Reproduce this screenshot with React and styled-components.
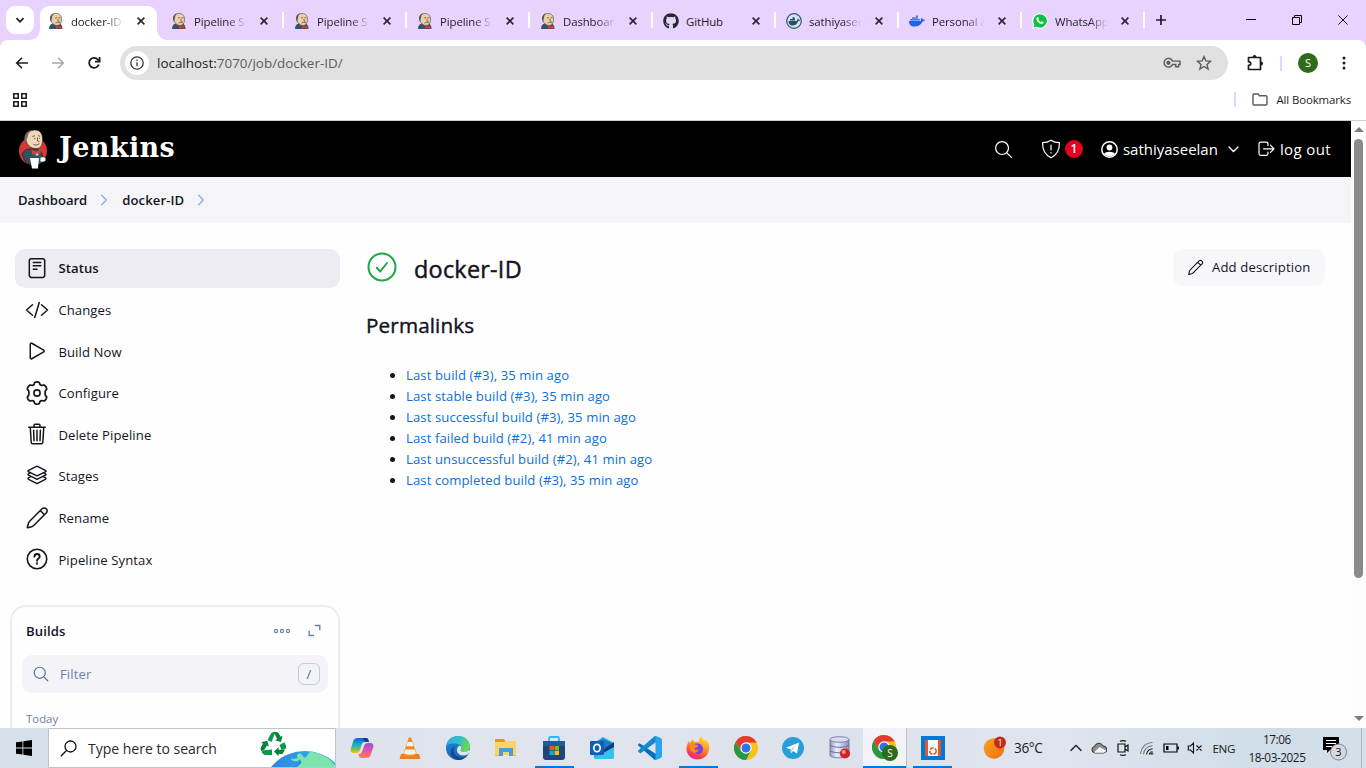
import React from "react";
import styled, { createGlobalStyle, css } from "styled-components";
import { FaGithub, FaDocker } from "react-icons/fa";

const Global = createGlobalStyle`
  *, *::before, *::after { box-sizing: border-box; }
  html, body { margin: 0; padding: 0; overflow: hidden; }
  body { font-family: "Open Sans", "Noto Sans", sans-serif; font-size: 13.1px; color: #14141f; background: #fefefe; }
  svg { display: block; flex: none; }
`;

const Screen = styled.div`
  width: 1366px;
  height: 768px;
  display: flex;
  flex-direction: column;
  overflow: hidden;
`;

const Label = styled.span`
  white-space: nowrap;
  line-height: 1;
  font-size: ${(p) => p.$size || 13.1}px;
  font-weight: ${(p) => p.$weight || 400};
  letter-spacing: ${(p) => (p.$track === undefined ? 0.1 : p.$track)}px;
  color: ${(p) => p.$color || "inherit"};
  padding-top: ${(p) => p.$drop || 0}px;
`;

/* ---------- Browser chrome ---------- */

const TabStrip = styled.div`
  height: 40px;
  flex: none;
  display: flex;
  align-items: flex-end;
  background: #e8d3ff;
  padding-left: 6px;
`;

const TabSearch = styled.div`
  width: 28px;
  height: 28px;
  margin: 0 6px 6px 0;
  border-radius: 9px;
  background: #fff;
  display: grid;
  place-items: center;
`;

const Tab = styled.div`
  position: relative;
  width: 117px;
  height: 34px;
  margin-right: 6px;
  padding: 0 12px 5px 8px;
  display: flex;
  align-items: center;
  border-radius: 9px 9px 0 0;
  background: ${(p) => (p.$active ? "#fff" : "transparent")};
  ${(p) =>
    p.$active &&
    css`
      &::before,
      &::after {
        content: "";
        position: absolute;
        bottom: 0;
        width: 10px;
        height: 10px;
      }
      &::before {
        left: -10px;
        background: radial-gradient(circle at 0 0, transparent 9.5px, #fff 10px);
      }
      &::after {
        right: -10px;
        background: radial-gradient(circle at 100% 0, transparent 9.5px, #fff 10px);
      }
    `}
  ${(p) =>
    p.$divider &&
    css`
      &::after {
        content: "";
        position: absolute;
        right: -4px;
        top: 6px;
        width: 2px;
        height: 16px;
        background: #fff;
      }
    `}
`;

const TabTitle = styled.span`
  width: 54px;
  margin: 2px 0 0 7px;
  white-space: nowrap;
  font-size: 11.4px;
  line-height: 20px;
  letter-spacing: -0.1px;
  color: #1f1b24;
  mask-image: ${(p) => (p.$fade ? "linear-gradient(to right, #000 62%, transparent 98%)" : "none")};
`;

const TabClose = styled.span`
  margin-left: auto;
`;

const NewTab = styled.div`
  height: 34px;
  margin-left: 8px;
  padding-bottom: 6px;
  display: grid;
  place-items: center;
`;

const WindowButtons = styled.div`
  margin-left: auto;
  height: 40px;
  display: flex;
  & > span {
    width: 46px;
    display: grid;
    place-items: center;
  }
`;

const ToolbarBack = styled.div`
  flex: none;
  background: #e8d3ff;
`;

const Toolbar = styled.div`
  height: 46px;
  display: flex;
  align-items: center;
  background: #fff;
  border-radius: 8px 8px 0 0;
  padding-left: 14px;
`;

const NavButton = styled.span`
  width: 16px;
  margin-right: 20px;
`;

const Omnibox = styled.div`
  width: 1108px;
  height: 34px;
  margin-left: -2px;
  border-radius: 17px;
  background: #e1e1e1;
  display: flex;
  align-items: center;
  padding: 0 16px 0 5px;
`;

const OmniActions = styled.div`
  display: flex;
  align-items: center;
  gap: 15px;
`;

const SiteInfo = styled.span`
  width: 24px;
  height: 24px;
  border-radius: 50%;
  background: #fff;
  display: grid;
  place-items: center;
  margin-right: 8px;
`;

const Url = styled.span`
  flex: 1;
  font-size: 13.4px;
  letter-spacing: 0.02px;
  color: #5b5b5f;
  b { font-weight: 400; color: #1c1b1f; }
`;

const ToolbarRight = styled.div`
  display: flex;
  align-items: center;
  margin-left: 18px;
`;

const Bar = styled.span`
  width: 2px;
  height: 15px;
  margin-left: ${(p) => p.$gap || 0}px;
  background: #e8d3ff;
`;

const Avatar = styled.span`
  width: 20px;
  height: 20px;
  border-radius: 50%;
  background: #2f6b1c;
  color: #fff;
  font: 11px/20px "Open Sans", sans-serif;
  text-align: center;
  margin: 0 24px 0 16px;
`;

const BookmarkBar = styled.div`
  height: 35px;
  flex: none;
  display: flex;
  align-items: center;
  padding: 0 15px 7px 13px;
  background: #fff;
  border-bottom: 1px solid #cfd1d0;
`;

const AllBookmarks = styled.div`
  margin-left: auto;
  display: flex;
  align-items: center;
`;

const FolderIcon = styled.svg`
  margin: 0 8px 0 16px;
`;

/* ---------- Page ---------- */

const Viewport = styled.div`
  height: 607px;
  flex: none;
  display: flex;
  overflow: hidden;
`;

const Page = styled.div`
  width: 1351px;
  height: 607px;
  overflow: hidden;
`;

const Scrollbar = styled.div`
  width: 15px;
  background: #fcfcfc;
  display: flex;
  flex-direction: column;
  align-items: center;
  padding: 6px 0 7px;
`;

const Thumb = styled.div`
  width: 9px;
  height: 439px;
  margin-top: 7px;
  border-radius: 5px;
  background: #8b8b8b;
`;

const Arrow = styled.div`
  border-left: 5px solid transparent;
  border-right: 5px solid transparent;
  ${(p) =>
    p.$down
      ? css`
          border-top: 5px solid #7d7d7d;
          margin-top: auto;
        `
      : css`
          border-bottom: 5px solid #7d7d7d;
        `}
`;

const Header = styled.header`
  height: 56px;
  background: #000;
  color: #fff;
  display: flex;
  align-items: center;
  padding: 0 20px 0 18px;
`;

const Wordmark = styled.span`
  margin-left: 11px;
  margin-top: -4px;
  font: bold 27px/1 "DejaVu Serif", serif;
  letter-spacing: 0.4px;
`;

const HeaderTools = styled.div`
  margin-left: auto;
  display: flex;
  align-items: center;
`;

const ShieldIcon = styled.svg`
  margin-left: 27px;
`;

const UserName = styled.span`
  display: flex;
  margin: 0 10px 0 5px;
`;

const LogoutIcon = styled.svg`
  margin: 0 5px 0 19px;
`;

const Badge = styled.span`
  width: 18px;
  height: 18px;
  border-radius: 50%;
  background: #e6001f;
  font-size: 12px;
  font-weight: 600;
  line-height: 18px;
  text-align: center;
  margin: 0 18px 0 4px;
`;

const Breadcrumbs = styled.nav`
  height: 46px;
  background: #f5f5f8;
  display: flex;
  align-items: center;
  padding-left: 18px;
  & > svg { margin: 0 11px 0 10px; }
`;

const Body = styled.div`
  display: flex;
`;

const Side = styled.aside`
  width: 340px;
  padding: 26px 0 0 15px;
`;

const Task = styled.div`
  height: 39px;
  margin-bottom: 2.6px;
  padding-left: 10px;
  border-radius: 10px;
  display: flex;
  align-items: center;
  background: ${(p) => (p.$active ? "#ececf2" : "transparent")};
  & > svg { margin: -1px 9.400px 0 0; }
`;

const BuildsCard = styled.section`
  width: 330px;
  height: 160px;
  margin: 26px 0 0 -5px;
  border: 2px solid #ebebf3;
  border-radius: 16px;
  padding: 11px 10px 0;
`;

const BuildsHead = styled.div`
  height: 27px;
  padding: 0 7px 0 4px;
  display: flex;
  align-items: center;
  color: #14141f;
  & > svg { margin-bottom: 2px; }
  & > svg:first-of-type { margin-left: auto; margin-right: 17px; }
`;

const FilterBox = styled.div`
  height: 38px;
  margin-top: 10px;
  padding: 0 8px 0 10px;
  border-radius: 10px;
  background: #f3f3f8;
  display: flex;
  align-items: center;
  color: #6a83a8;
  & > svg { margin-right: 10px; }
`;

const KeyHint = styled.span`
  width: 22px;
  height: 22px;
  margin-left: auto;
  border: 1px solid #c3ccdb;
  border-radius: 6px;
  display: grid;
  place-items: center;
  font-size: 13px;
  line-height: 1;
  color: #4d6a94;
`;

const Day = styled.div`
  margin: 19px 0 0 4px;
  font-size: 11.4px;
  line-height: 13px;
  color: #6a83a8;
`;

const Main = styled.main`
  flex: 1;
  padding: 26px 26px 0 26px;
`;

const TitleRow = styled.div`
  height: 38px;
  display: flex;
  align-items: center;
  & > svg { margin: -2px 16px 0 0; }
`;

const Title = styled.h1`
  margin: 1px 0 0;
  font-size: 23.400px;
  font-weight: 500;
  line-height: 38px;
  letter-spacing: 0.25px;
  -webkit-text-stroke: 0.45px currentColor;
`;

const EditButton = styled.div`
  width: 152px;
  height: 37px;
  margin: -1px 0 0 auto;
  border-radius: 10px;
  background: #f7f7fa;
  display: flex;
  align-items: center;
  padding-left: 14px;
  gap: 8px;
`;

const Subtitle = styled.h2`
  margin: 23px 0 0;
  font-size: 20.7px;
  font-weight: 500;
  line-height: 30px;
  letter-spacing: 0.12px;
  -webkit-text-stroke: 0.4px currentColor;
`;

const Links = styled.ul`
  margin: 25px 0 0;
  padding: 0 0 0 40px;
  line-height: 21px;
`;

const LinkItem = styled.li`
  & > span { line-height: 21px; color: #0a70dc; }
`;

/* ---------- Taskbar ---------- */

const Taskbar = styled.div`
  height: 40px;
  flex: none;
  display: flex;
  background: linear-gradient(to right, #d5e0ea 0, #dfe3ec 350px, #e1e4ed 600px, #dce2eb 850px, #e0e4ee 1050px, #d0dee9 1250px, #d3dfe9 100%);
`;

const Start = styled.div`
  width: 48px;
  display: grid;
  place-items: center;
`;

const SearchBox = styled.div`
  width: 288px;
  height: 40px;
  background: #fff;
  border: 1px solid #bfc4c9;
  display: flex;
  align-items: center;
  padding-left: 11px;
  & > span { margin-left: 11px; color: #2b2b2b; }
`;

const Doodle = styled.svg`
  margin-left: auto;
`;

const Apps = styled.div`
  display: flex;
  margin-left: 2px;
`;

const AppSlot = styled.div`
  width: ${(p) => p.$w || 48}px;
  height: 40px;
  display: flex;
  align-items: center;
  justify-content: center;
  background-color: ${(p) => (p.$focus ? "#f1f3f8" : "transparent")};
  box-shadow: ${(p) => (p.$focus ? "1px 0 0 #b9c1ca" : "none")};
  background-image: ${(p) => (p.$open ? "linear-gradient(#0078d7, #0078d7)" : "none")};
  background-size: ${(p) => p.$line || 39}px 2px;
  background-repeat: no-repeat;
  background-position: 50% 100%;
`;

const Tray = styled.div`
  flex: 1;
  display: flex;
  align-items: center;
  padding-left: 24px;
  color: #1a1a1a;
`;

const TrayIcons = styled.div`
  display: flex;
  align-items: center;
  margin-left: 26px;
  gap: 8px;
`;

const WeatherText = styled.span`
  margin-left: 7px;
`;

const LangText = styled.span`
  margin-left: 10px;
`;

const Clock = styled.div`
  width: 62px;
  margin-left: 11px;
  text-align: center;
  font-size: 11.8px;
  line-height: 18px;
  letter-spacing: -0.45px;
  white-space: nowrap;
`;

const Notice = styled.svg`
  margin-left: 14px;
`;

const ShowDesktop = styled.span`
  width: 1px;
  height: 40px;
  background: #a9b3bc;
  margin: 0 4px 0 auto;
`;

/* ---------- Icons ---------- */

const Stroke = ({ size = 24, w = 32, children, color = "currentColor" }) => (
  <svg width={size} height={size} viewBox="0 0 512 512" fill="none" stroke={color} strokeWidth={w} strokeLinecap="round" strokeLinejoin="round">
    {children}
  </svg>
);

const SearchIcon = (p) => (
  <Stroke {...p}>
    <path d="M221 64a157 157 0 1 0 157 157A157 157 0 0 0 221 64zM338 338l110 110" />
  </Stroke>
);
const StatusIcon = () => (
  <Stroke>
    <rect x="92" y="56" width="328" height="400" rx="44" />
    <path d="M176 136h160M176 208h160M176 280h80" />
  </Stroke>
);
const CodeIcon = () => (
  <Stroke>
    <path d="M160 368 32 256l128-112M352 368l128-112-128-112M304 96l-96 320" />
  </Stroke>
);
const PlayIcon = () => (
  <Stroke>
    <path d="M112 111v290c0 17 18 28 33 20l254-145c15-9 15-31 0-40L145 91c-15-8-33 3-33 20z" />
  </Stroke>
);
const GearIcon = () => (
  <Stroke w={34}>
    <circle cx="256" cy="256" r="66" />
    <path d="M210 48 Q256 24 302 48 L316 92 Q332 108 354 106 L398 98 Q442 126 448 176 L420 214 Q412 256 420 298 L448 336 Q442 386 398 414 L354 406 Q332 404 316 420 L302 464 Q256 488 210 464 L196 420 Q180 404 158 406 L114 414 Q70 386 64 336 L92 298 Q100 256 92 214 L64 176 Q70 126 114 98 L158 106 Q180 108 196 92 Z" transform="translate(-20 -20) scale(1.08)" />
  </Stroke>
);
const TrashIcon = () => (
  <Stroke>
    <path d="m112 112 20 320c1 18 14 32 32 32h184c18 0 31-14 32-32l20-320M80 112h352M192 112V72a24 24 0 0 1 24-24h80a24 24 0 0 1 24 24v40M256 176v224M184 176l8 224M328 176l-8 224" />
  </Stroke>
);
const LayersIcon = () => (
  <Stroke>
    <path d="M434 137 266 52q-10-5-20 0L78 137c-18 9-18 21 0 30l168 82q10 5 20 0l168-82c18-9 18-21 0-30z" />
    <path d="m112 184-34 20c-18 9-18 26 0 35l168 85q10 5 20 0l168-85c18-9 18-26 0-35l-34-20M112 272l-34 20c-18 9-18 26 0 35l168 85q10 5 20 0l168-85c18-9 18-26 0-35l-34-20" />
  </Stroke>
);
const PencilIcon = ({ size = 24, w = 32 }) => (
  <Stroke size={size} w={w}>
    <path d="M364 60 104 320c-16 16-26 32-32 52l-22 82c-2 8 2 11 10 9l80-22c20-6 36-16 52-32l260-260c24-24 24-62 0-88s-64-25-88-1zM326 98l88 88" />
  </Stroke>
);
const HelpIcon = () => (
  <Stroke w={34}>
    <circle cx="256" cy="256" r="208" />
    <path d="M202 202c2-72 110-70 112 0 0 46-58 44-58 92" strokeWidth="40" />
    <circle cx="256" cy="352" r="8" fill="currentColor" />
  </Stroke>
);
const Chevron = ({ size = 14, color = "#9aaccb" }) => (
  <Stroke size={size} w={50} color={color}>
    <path d="m170 80 172 176-172 176" />
  </Stroke>
);

const Butler = () => (
  <svg width="16" height="16" viewBox="0 0 32 32">
    <path d="M2 32c0-7 3-10 8-11h12c5 1 7 4 7 11z" fill="#2f5468" />
    <path d="M6 14C4 6 8 1 16 1s11 5 11 12c0 8-4 12-9 12S7 21 6 14z" fill="#edcfa8" stroke="#5c4a40" strokeWidth="1.300" />
    <path d="M6 18C2 11 4 2 12 1c-3 3-4 6-4 10-1 1-2 3-2 7z" fill="#5e5653" />
    <path d="M14 10l4-1M21 9l4 1M20 11v5l3 1M15 20q4-3 9 0" stroke="#4a3a33" strokeWidth="1.300" fill="none" />
    <path d="M16 25l5 2 6-2v7l-6-2-5 2z" fill="#d33833" />
  </svg>
);

const JenkinsMark = () => (
  <svg width="30" height="40" viewBox="0 0 30 40">
    <ellipse cx="15" cy="22" rx="14" ry="14" fill="#d33833" />
    <path d="M4 25c3-5 6-5 10-5s8 0 10 5l2 7-4 3H9l-3-5z" fill="#335061" stroke="#111" strokeWidth=".6" />
    <path d="M8 11C8 4 12 1 17 1c5 0 8 4 7.500 10.500 0 5.500-2.500 8-6.500 8-5 0-9-3-10-8.500z" fill="#f0d6b7" stroke="#222" strokeWidth=".6" />
    <path d="M7 14C5 7 8 1.500 14 1.200 10.500 3 10 5 9.700 8.500 8.500 9.500 7.500 11 7 14z" fill="#6d6b6d" />
    <path d="M14.500 7.500l2.500-.8M20 6.500l2 .8M19.500 8.500v3.500l2 .8M15.500 15.500q3 1.500 6-.8M16 9.500h1.300M21 9.300h1" stroke="#332b28" strokeWidth=".7" fill="none" />
    <path d="M13.500 20.500l5 2.300 4-3v5.500l-4-1.500-4 2.500z" fill="#e23b36" />
    <circle cx="19" cy="25.500" r="1.600" fill="#9fb9c8" />
    <path d="M12 29h9l-1 10.500h-6z" fill="#fff" />
    <path d="M22.500 28.500c3-1.500 6 0 5 3-1 1.500-4 2-5.500.5z" fill="#fff" stroke="#555" strokeWidth=".4" />
  </svg>
);

const CloseIcon = () => (
  <svg width="8" height="8" viewBox="0 0 8 8" stroke="#2a2630" strokeWidth="1.600">
    <path d="M.6.6l6.800 6.800M7.400.6.6 7.400" />
  </svg>
);

const DockerBadge = () => (
  <svg width="16" height="16" viewBox="0 0 16 16">
    <circle cx="8" cy="8" r="7.300" fill="#d7e3ef" stroke="#33566f" strokeWidth="1.200" />
    <path d="M2.500 8h8c1 0 .6-2 1.500-2.500.8.5.8 1 .8 1.400.5-.1 1.200 0 1.200.3-.5.9-1.400 1-2 1C11 11.500 9 12.500 6.500 12.500 4 12.500 2.500 11 2.500 8zM4 6h5v1.500H4zM6.500 4.200h2.200V6H6.500z" fill="#27506b" />
  </svg>
);

const WhatsApp = () => (
  <svg width="16" height="16" viewBox="0 0 16 16">
    <path d="M8 .3A7.700 7.700 0 0 0 1.400 12L.3 15.800l3.900-1A7.700 7.700 0 1 0 8 .3z" fill="#fff" />
    <path d="M8 1.300a6.700 6.700 0 0 0-5.700 10.200l-.8 2.900 3-.8A6.700 6.700 0 1 0 8 1.300z" fill="#0bc143" />
    <path d="M5.200 4.200c.5-.4 1-.3 1.200.2l.5 1.200c.1.400-.6.800-.5 1.200.5 1 1.500 1.800 2.500 2.200.4.100.8-.9 1.200-.7l1.400.7c.4.300 0 1.400-.8 1.800-2.800 1-6.800-3-6.300-5.300.1-.5.400-1 .8-1.300z" fill="#fff" />
  </svg>
);

const Chrome = ({ badge }) => (
  <svg width={badge ? 26 : 24} height={badge ? 26 : 24} viewBox={badge ? "0 0 26 26" : "0 0 24 24"}>
    <circle cx="12" cy="12" r="12" fill="#fbc116" />
    <path d="M1.600 6A12 12 0 0 1 22.600 6.500H12L7.200 15z" fill="#e33b2e" />
    <path d="M1.600 6l5.600 9.400 9.500-.4L12 24A12 12 0 0 1 1.600 6z" fill="#279847" />
    <circle cx="12" cy="12" r="5.700" fill="#fff" />
    <circle cx="12" cy="12" r="4.500" fill="#2f73e8" />
    {badge && (
      <>
        <circle cx="18" cy="18" r="8" fill="#2f6b1c" />
        <text x="18" y="21.800" fontSize="10" fill="#fff" textAnchor="middle" fontFamily="Open Sans, sans-serif">S</text>
      </>
    )}
  </svg>
);

const Copilot = () => (
  <svg width="24" height="22" viewBox="0 0 24 22">
    <defs>
      <linearGradient id="cpA" x1="0" y1="0" x2="0" y2="1"><stop offset="0" stopColor="#0f62d9" /><stop offset=".45" stopColor="#19a9d5" /><stop offset=".75" stopColor="#7bc24a" /><stop offset="1" stopColor="#f5c01c" /></linearGradient>
      <linearGradient id="cpB" x1="0" y1="0" x2="0" y2="1"><stop offset="0" stopColor="#9b4fe0" /><stop offset=".5" stopColor="#e354a6" /><stop offset="1" stopColor="#fb8249" /></linearGradient>
    </defs>
    <path d="M8 1h8c2 0 2.500 2 3 4h-4c-2 0-3 1-3.500 3L10 13c-.6 2-1.500 3-4 3H4c-3 0-4-2-3-5l2-6c.8-3 2-4 5-4z" fill="url(#cpA)" />
    <path d="M18 6h2c3 0 4 2 3 5l-2 6c-.8 3-2 4-5 4h-4c-2 0-3-1-3.500-4 2 0 3-.5 3.800-3L14 9c.6-2 1.500-3 4-3z" fill="url(#cpB)" />
    <path d="M8 1h8c2 0 2.500 2 3 4h-3c-2 0-2.500-4-4.500-4z" fill="#173c96" />
  </svg>
);
const Vlc = () => (
  <svg width="22" height="24" viewBox="0 0 22 24">
    <path d="M2 18h18l1.500 5H.5z" fill="#ef7f12" />
    <path d="M9.700 2Q11 .3 12.300 2L18 19q-7 4-14 0z" fill="#f28a1d" />
    <path d="M8.600 6h4.800l1.300 4.200H7.300zM6.200 13.500h9.600l1.200 4q-6 2.400-12 0z" fill="#f2f2f2" />
  </svg>
);
const Edge = () => (
  <svg width="24" height="24" viewBox="0 0 24 24">
    <defs>
      <linearGradient id="edA" x1="0" y1="0" x2="1" y2=".4"><stop offset="0" stopColor="#2aa6dd" /><stop offset=".55" stopColor="#35c1c8" /><stop offset="1" stopColor="#62db4d" /></linearGradient>
      <linearGradient id="edB" x1="0" y1="0" x2="0" y2="1"><stop offset="0" stopColor="#2088d8" /><stop offset="1" stopColor="#1469bd" /></linearGradient>
    </defs>
    <circle cx="12" cy="12" r="12" fill="url(#edB)" />
    <path d="M.2 10C1 4 6 0 12 0c7 0 12 5 12 10.500 0 3.500-2.600 5.500-6 5.500-2.500 0-4-1-3-2.500 1.500-3-1-5.500-5-6C6 7 2 8 .2 10z" fill="url(#edA)" />
    <path d="M9 10c-3 4-1 10 5 11.500 3 .7 6-.5 8-3.500C20 22 16 24 12 24 7 23 4 19 5 15c.5-2.500 2-4.500 4-5z" fill="#114a8b" />
    <path d="M14 9.500c1.500 1.500 1.500 3 .8 4-.8 1.500.7 2.500 3.200 2.500 2 0 4-.7 5-2l1.500.6-2.500 3.600c-5 2.500-10 1-11-3-.4-2 .5-5 3-5.700z" fill="#e0e4ed" />
  </svg>
);
const Explorer = () => (
  <svg width="22" height="20" viewBox="0 0 22 20">
    <path d="M0 1h8l2 2h11v14H0z" fill="#fcd462" />
    <path d="M0 1h8.500l2 1.500L9 4H0z" fill="#d79d14" />
    <path d="M4 18v-8h14v8h-4v-4H8v4z" fill="#4b9bdc" />
    <path d="M0 17h4v1H0zM18 17h3v1h-3z" fill="#f0b93a" />
  </svg>
);
const Store = () => (
  <svg width="24" height="24" viewBox="0 0 24 24">
    <path d="M7 6V2.500C7 1.500 7.500 1 8.500 1h7c1 0 1.500.5 1.500 1.500V6" fill="none" stroke="#2cb8ee" strokeWidth="1.800" />
    <path d="M1 5h22v16c0 2-1 3-3 3H4c-2 0-3-1-3-3z" fill="#1f4478" />
    <path d="M1 5h22v5H1z" fill="#1f5a99" />
    <path d="M7.500 10H12v4.200H7.500z" fill="#f35325" /><path d="M12.600 10H17v4.200h-4.400z" fill="#81bc06" /><path d="M7.500 14.800H12V19H7.500z" fill="#05a6f0" /><path d="M12.600 14.800H17V19h-4.400z" fill="#ffba08" />
  </svg>
);
const Outlook = () => (
  <svg width="24" height="24" viewBox="0 0 24 24">
    <path d="M4 7 13 1l11 6v14c0 1-1 2-2 2H6c-1 0-2-1-2-2z" fill="#28a8ea" />
    <path d="M13 3l9 4-8 7-5-9z" fill="#1a78c8" /><path d="M24 6v6L14 19v-6z" fill="#123b7c" /><path d="M4 22 24 11v10c0 1-1 2-2 2H6z" fill="#35c1f3" />
    <rect y="5" width="14" height="14" rx="1" fill="#0f5db5" />
    <ellipse cx="7" cy="12" rx="3.200" ry="3.700" fill="none" stroke="#fff" strokeWidth="1.700" />
  </svg>
);
const VsCode = () => (
  <svg width="24" height="24" viewBox="0 0 24 24">
    <path d="M1.500 7.200.2 8.500q-.4.500 0 1l16 14q1 .8 1.800.4V18z" fill="#0a6fb8" />
    <path d="M1.500 16.800.2 15.500q-.4-.5 0-1l16-14Q17.200-.3 18 .1V6L3 17q-.8.500-1.500-.2z" fill="#1387cf" />
    <path d="M18 0l5 2.300q1 .5 1 1.500v16.400q0 1-1 1.500L18 24q-.8.300-1.600-.4.600.3 1.100-.6V1q-.5-.9-1.100-.6Q17.200-.3 18 0z" fill="#2ba4ee" />
  </svg>
);
const Firefox = () => (
  <svg width="24" height="24" viewBox="0 0 24 24">
    <defs><linearGradient id="ffA" x1=".8" y1="0" x2=".3" y2="1"><stop offset="0" stopColor="#ffe640" /><stop offset=".45" stopColor="#ff9421" /><stop offset=".8" stopColor="#ff3d4c" /><stop offset="1" stopColor="#e7268f" /></linearGradient></defs>
    <path d="M15 0c2 2 2.500 3.500 3 4.500 1.500.3 1.500-.5 1.500-1C23 6 24 10 23 14c-1 6-6 9.500-11 9.500C5 23.500.5 18.500.5 13c0-3 1-6 2.500-8l.8 2.500C5 5.500 6 4 6.500 3c.5 1.500 1 2.500 2.500 3 1.500-.5 3-.2 4 0C13 4 13.500 1.500 15 0z" fill="url(#ffA)" />
    <path d="M7 9c4-3 10-1 10 4s-6 7-9 3c3 1 4-1 5-2.500H9C7.500 13.500 6.500 11 7 9z" fill="#7542e5" />
    <path d="M4 8c2-1 4-.5 5 .5 2 .5 3 .6 3.500 1-1 2-3.500 2-4 3-.3 2 1.500 3 3.500 2.500-2 3-7 2-8-2-.5-2 0-4 0-5z" fill="#ff8a16" />
  </svg>
);
const Telegram = () => (
  <svg width="22" height="22" viewBox="0 0 22 22">
    <circle cx="11" cy="11" r="11" fill="#289fd9" />
    <path d="M4 10.800 17 5.500 15 16.500 11 14l-2 2.300-.7-4z" fill="#fff" /><path d="m8.500 12.300 6-4.800-4 5.800-1.500 2.500z" fill="#b9d9ec" />
  </svg>
);
const Database = () => (
  <svg width="22" height="24" viewBox="0 0 22 24">
    <defs><linearGradient id="dbA"><stop offset="0" stopColor="#8e96c6" /><stop offset=".35" stopColor="#eef0fd" /><stop offset="1" stopColor="#878fc2" /></linearGradient></defs>
    <path d="M1 3.500v16c0 3 19 3 19 0v-16z" fill="url(#dbA)" stroke="#666c96" strokeWidth=".8" />
    <ellipse cx="10.500" cy="3.500" rx="9.500" ry="2.800" fill="#d7dbf5" stroke="#666c96" strokeWidth=".8" />
    <path d="M1 9c2 3 17 3 19 0M1 14.500c2 3 17 3 19 0" fill="none" stroke="#666c96" />
    <circle cx="16" cy="17.500" r="5" fill="#d3221f" /><circle cx="14.800" cy="16" r="1.900" fill="#f79a92" />
  </svg>
);
const VmIcon = () => (
  <svg width="24" height="24" viewBox="0 0 24 24">
    <path d="M0 0h24v24H0z" fill="#0078d7" /><path d="M4 4h16v16H4z" fill="#fff" /><path d="M4 4h3v16H4zM17 4h3v16h-3z" fill="#e6552b" />
    <circle cx="12" cy="15" r="3.200" fill="none" stroke="#e6552b" strokeWidth="1.500" strokeDasharray="4.500 1" />
  </svg>
);
const Weather = () => (
  <svg width="24" height="24" viewBox="0 0 24 24">
    <defs><linearGradient id="sun" x1="0" y1="0" x2="1" y2="1"><stop offset="0" stopColor="#f8a51b" /><stop offset="1" stopColor="#f06d12" /></linearGradient></defs>
    <circle cx="11" cy="12.500" r="10.300" fill="url(#sun)" />
    <circle cx="17" cy="6.500" r="6" fill="#c42b1c" />
    <text x="17" y="10" fontSize="9" fill="#fff" textAnchor="middle" fontFamily="Open Sans, sans-serif">1</text>
  </svg>
);

const Recycle = () => (
  <Doodle width="76" height="38" viewBox="0 0 76 38">
    <defs><linearGradient id="globe" x1="0" y1="0" x2="1" y2="0"><stop offset=".1" stopColor="#2d83df" /><stop offset=".6" stopColor="#2ea7ee" /></linearGradient></defs>
    <g fill="#0a9a4b">
      <path d="M8.500 11 12 4.500Q12.800 3 14.500 3h2L12.500 13z" />
      <path d="M15 3h2.500Q19 3 20 4.800l1.600 3 1.900-1-1.500 6.200-6-1.700 2-1.200z" fill="#07833d" />
      <path d="m20.500 16 4.800-2.700 1.500 3q1.200 2.700-1.300 4.200l-3 .4z" />
      <path d="M25.700 21 23.500 25h-4v2.300l-4.500-4.700 4.500-4.300v2.400h4z" fill="#07833d" />
      <path d="M13 20.500V26H6Q4 25.500 3 23.500l-.5-2z" />
      <path d="M2.300 22Q1 20 2 18l2-3.600-2-1.200 6.300-1.400 1.600 5.900-2-1.100-2.300 4z" fill="#07833d" />
    </g>
    <circle cx="46" cy="66" r="44" fill="url(#globe)" />
    <path d="M52 22.500C64 25 72 30 77 38H31l4-1.500c3-1 4-2 3-4.500-4 1-6-1-6-3 3 2 4 0 7 0-3-3 1-5.500 3-4 3 2 2 5 5 3 2-2 2-4 5-5.500z" fill="#7fe3b0" />
    <path d="M40 30.500q3 1 2 4l-4 3.500h-7l4-1.500q3-2 5-6z" fill="#2f8de3" />
  </Doodle>
);

/* ---------- Data ---------- */

const tabs = [
  { title: "docker-ID", icon: <Butler />, active: true, fade: true },
  { title: "Pipeline S", icon: <Butler />, divider: true, fade: true },
  { title: "Pipeline S", icon: <Butler />, divider: true, fade: true },
  { title: "Pipeline S", icon: <Butler />, divider: true, fade: true },
  { title: "Dashboar", icon: <Butler />, divider: true, fade: true },
  { title: "GitHub", icon: <FaGithub size={16} color="#24292f" />, divider: true },
  { title: "sathiyasee", icon: <DockerBadge />, divider: true, fade: true },
  { title: "Personal a", icon: <FaDocker size={16} color="#1d63ed" />, divider: true, fade: true },
  { title: "WhatsApp", icon: <WhatsApp />, divider: true, fade: true },
];

const tasks = [
  ["Status", StatusIcon],
  ["Changes", CodeIcon],
  ["Build Now", PlayIcon],
  ["Configure", GearIcon],
  ["Delete Pipeline", TrashIcon],
  ["Stages", LayersIcon],
  ["Rename", PencilIcon],
  ["Pipeline Syntax", HelpIcon],
];

const permalinks = [
  "Last build (#3), 35 min ago",
  "Last stable build (#3), 35 min ago",
  "Last successful build (#3), 35 min ago",
  "Last failed build (#2), 41 min ago",
  "Last unsuccessful build (#2), 41 min ago",
  "Last completed build (#3), 35 min ago",
];

export default function App() {
  return (
    <Screen>
      <Global />
      <TabStrip>
        <TabSearch>
          <svg width="10" height="7" viewBox="0 0 10 7" fill="none" stroke="#1f1b24" strokeWidth="1.800"><path d="M1.500 1.200 5 4.800l3.500-3.600" /></svg>
        </TabSearch>
        {tabs.map((t, i) => (
          <Tab key={i} $active={t.active} $divider={t.divider}>
            {t.icon}
            <TabTitle $fade={t.fade}>{t.title}</TabTitle>
            <TabClose><CloseIcon /></TabClose>
          </Tab>
        ))}
        <NewTab>
          <svg width="12" height="12" viewBox="0 0 12 12" stroke="#1f1b24" strokeWidth="1.700"><path d="M6 1v10M1 6h10" /></svg>
        </NewTab>
        <WindowButtons>
          <span><svg width="10" height="10" viewBox="0 0 10 10" stroke="#000"><path d="M0 4.500h10" /></svg></span>
          <span><svg width="10" height="10" viewBox="0 0 10 10" stroke="#000" fill="none"><path d="M.5 2.500h7v7h-7zM2.500 2.500v-2h7v7h-2" /></svg></span>
          <span><svg width="10" height="10" viewBox="0 0 11 11" stroke="#000"><path d="M.5.5l10 10M10.500.5l-10 10" /></svg></span>
        </WindowButtons>
      </TabStrip>
      <ToolbarBack>
        <Toolbar>
          <NavButton><svg width="16" height="16" viewBox="0 0 16 16" fill="none" stroke="#1f1b24" strokeWidth="1.600"><path d="M14 8H3M8 2.700 2.700 8 8 13.300" /></svg></NavButton>
          <NavButton><svg width="16" height="16" viewBox="0 0 16 16" fill="none" stroke="#a7a6a9" strokeWidth="1.500"><path d="M2 8h11M8 2.700 13.300 8 8 13.300" /></svg></NavButton>
          <NavButton><svg width="16" height="16" viewBox="0 0 16 16" fill="none" stroke="#1f1b24" strokeWidth="1.800"><path d="M12.800 9.500A5 5 0 1 1 12 4.700L13.300 6M13.600 2v4.700H9" /></svg></NavButton>
          <Omnibox>
            <SiteInfo>
              <svg width="14" height="14" viewBox="0 0 14 14" fill="none" stroke="#37353b" strokeWidth="1.300"><circle cx="7" cy="7" r="6.200" /><path d="M7 6.200v4M7 3.600v1.500" /></svg>
            </SiteInfo>
            <Url><b>localhost:</b>7070/job/docker-ID/</Url>
            <OmniActions>
              <svg width="18" height="12" viewBox="0 0 19 12" fill="none" stroke="#5b5b5f" strokeWidth="1.500"><path d="M10 4h8v3.500h-1.500V10h-3V7.500H10A4.600 4.600 0 1 1 10 4z" /><circle cx="5.700" cy="5.800" r="1.500" fill="#5b5b5f" /></svg>
              <svg width="16" height="16" viewBox="0 0 16 16" fill="none" stroke="#5b5b5f" strokeWidth="1.400"><path d="m8 1.600 1.900 4.300 4.700.4-3.600 3.100 1.100 4.600L8 11.500 3.900 14 5 9.400 1.400 6.300l4.700-.4z" /></svg>
            </OmniActions>
          </Omnibox>
          <ToolbarRight>
            <svg width="18" height="18" viewBox="0 0 18 18" fill="none" stroke="#1f1b24" strokeWidth="1.700"><path d="M2.500 3.500h12v12h-12v-4.200c3 0 3-3.600 0-3.600z" strokeLinejoin="round" /><path d="M6.500 3a2 2 0 0 1 4 0zM15 7.500a2 2 0 0 1 0 4z" fill="#1f1b24" stroke="none" /></svg>
            <Bar $gap={16} />
            <Avatar>S</Avatar>
            <svg width="4" height="14" viewBox="0 0 4 14" fill="#1f1b24"><circle cx="2" cy="2" r="1.500" /><circle cx="2" cy="7" r="1.500" /><circle cx="2" cy="12" r="1.500" /></svg>
          </ToolbarRight>
        </Toolbar>
      </ToolbarBack>
      <BookmarkBar>
        <svg width="14" height="14" viewBox="0 0 14 14" fill="none" stroke="#1f1b24" strokeWidth="1.600"><path d="M.8.800h4.400v4.400H.8zM8.800.8h4.400v4.400H8.800zM.8 8.800h4.400v4.400H.8zM8.800 8.800h4.400v4.400H8.800z" /></svg>
        <AllBookmarks>
          <Bar />
          <FolderIcon width="16" height="13" viewBox="0 0 16 13" fill="none" stroke="#5b5b5f" strokeWidth="1.400"><path d="M1 2.200q0-1.200 1.200-1.200H6l1.500 1.800h6.300q1.200 0 1.200 1.200v6.800q0 1.200-1.200 1.200H2.200Q1 12 1 10.800z" /></FolderIcon>
          <Label $size={11.4} $track={-0.1} $color="#1f1b24">All Bookmarks</Label>
        </AllBookmarks>
      </BookmarkBar>

      <Viewport>
        <Page>
          <Header>
            <JenkinsMark />
            <Wordmark>Jenkins</Wordmark>
            <HeaderTools>
              <SearchIcon size={21} w={30} />
              <ShieldIcon width="20" height="20" viewBox="0 0 20 20" fill="none" stroke="#fff" strokeWidth="1.200" strokeLinecap="round" strokeLinejoin="round"><path d="M10 1.200C7.500 3 4.500 3.700 1.600 3.700 1.400 10 3.500 15.500 10 18.800c6.500-3.300 8.600-8.800 8.400-15.100-2.900 0-5.900-.7-8.400-2.500zM10 6v5M10 13.500v.5" /></ShieldIcon>
              <Badge>1</Badge>
              <svg width="17" height="17" viewBox="0 0 17 17"><circle cx="8.500" cy="8.500" r="7.700" fill="none" stroke="#fff" strokeWidth="1.500" /><circle cx="8.500" cy="6.500" r="2.900" fill="#fff" /><path d="M3 12.800C4.500 10 12.500 10 14 12.800 11 16.500 6 16.500 3 12.800z" fill="#fff" /></svg>
              <UserName><Label $size={15} $track={0}>sathiyaseelan</Label></UserName>
              <svg width="11" height="7" viewBox="0 0 11 7" fill="none" stroke="#fff" strokeWidth="1.300" strokeLinecap="round"><path d="M1 1l4.500 4.500L10 1" /></svg>
              <LogoutIcon width="17" height="16" viewBox="0 0 17 16" fill="none" stroke="#fff" strokeWidth="1.200" strokeLinecap="round" strokeLinejoin="round"><path d="M10 4.500V3q0-1.800-1.800-1.800H2.800Q1 1.200 1 3v9.500q0 1.800 1.800 1.800h5.400q1.800 0 1.800-1.800V11M12.500 4.200 16 7.800l-3.500 3.500M5.500 7.800H16" /></LogoutIcon>
              <Label $size={15} $track={0.38}>log out</Label>
            </HeaderTools>
          </Header>
          <Breadcrumbs>
            <Label $weight={600} $track={-0.02} $drop={1}>Dashboard</Label>
            <Chevron />
            <Label $weight={600} $track={0.1} $drop={1}>docker-ID</Label>
            <Chevron />
          </Breadcrumbs>
          <Body>
            <Side>
              {tasks.map(([name, Icon], i) => (
                <Task key={name} $active={i === 0}>
                  <Icon />
                  <Label $weight={i === 0 ? 600 : 400} $drop={1}>{name}</Label>
                </Task>
              ))}
              <BuildsCard>
                <BuildsHead>
                  <Label $weight={600}>Builds</Label>
                  <svg width="18" height="6" viewBox="0 0 18 6" fill="none" stroke="#6a83a8" strokeWidth="1.200"><circle cx="3" cy="3" r="1.600" /><circle cx="9" cy="3" r="1.600" /><circle cx="15" cy="3" r="1.600" /></svg>
                  <svg width="13" height="13" viewBox="0 0 13 13" fill="none" stroke="#6a83a8" strokeWidth="1.400"><path d="M7 1.500h4.800v4.800M1.200 6.700v4.800H6" /></svg>
                </BuildsHead>
                <FilterBox>
                  <SearchIcon size={18} w={34} color="#55749f" />
                  <Label $drop={1}>Filter</Label>
                  <KeyHint>/</KeyHint>
                </FilterBox>
                <Day>Today</Day>
              </BuildsCard>
            </Side>
            <Main>
              <TitleRow>
                <svg width="32" height="32" viewBox="0 0 32 32" fill="none" stroke="#1ea64b" strokeWidth="2" strokeLinecap="round" strokeLinejoin="round"><circle cx="16" cy="16" r="13.500" /><path d="m10.800 16.800 3.400 3.700 6.800-8.500" /></svg>
                <Title>docker-ID</Title>
                <EditButton>
                  <PencilIcon size={17} w={32} />
                  <Label $track={0.15} $drop={1}>Add description</Label>
                </EditButton>
              </TitleRow>
              <Subtitle>Permalinks</Subtitle>
              <Links>
                {permalinks.map((l) => (
                  <LinkItem key={l}><Label>{l}</Label></LinkItem>
                ))}
              </Links>
            </Main>
          </Body>
        </Page>
        <Scrollbar>
          <Arrow />
          <Thumb />
          <Arrow $down />
        </Scrollbar>
      </Viewport>

      <Taskbar>
        <Start>
          <svg width="16" height="16" viewBox="0 0 16 16" fill="#000"><path d="M0 2.300 6.500 1.400v6.200H0zM7.300 1.300 16 0v7.600H7.300zM0 8.400h6.500v6.200L0 13.700zM7.300 8.400H16V16l-8.700-1.200z" /></svg>
        </Start>
        <SearchBox>
          <svg width="17" height="17" viewBox="0 0 17 17" fill="none" stroke="#111" strokeWidth="1.300"><circle cx="10.500" cy="6.500" r="5.500" /><path d="M6.500 10.500.8 16.200" /></svg>
          <Label $size={14} $track={0} $drop={2}>Type here to search</Label>
          <Recycle />
        </SearchBox>
        <Apps>
          <AppSlot><Copilot /></AppSlot>
          <AppSlot><Vlc /></AppSlot>
          <AppSlot><Edge /></AppSlot>
          <AppSlot><Explorer /></AppSlot>
          <AppSlot $open><Store /></AppSlot>
          <AppSlot><Outlook /></AppSlot>
          <AppSlot><VsCode /></AppSlot>
          <AppSlot $open><Firefox /></AppSlot>
          <AppSlot $w={47}><Chrome /></AppSlot>
          <AppSlot $w={47}><Telegram /></AppSlot>
          <AppSlot $w={47}><Database /></AppSlot>
          <AppSlot $w={43} $line={43} $open $focus><Chrome badge /></AppSlot>
          <AppSlot $w={53} $open><VmIcon /></AppSlot>
        </Apps>
        <Tray>
          <Weather />
          <WeatherText><Label $size={13.6} $track={-0.35}>36°C</Label></WeatherText>
          <TrayIcons>
            <svg width="14" height="8" viewBox="-1 0 14 8" fill="none" stroke="#111" strokeWidth="1.300"><path d="M.6 6.800 6 1.400l5.400 5.400" /></svg>
            <svg width="16" height="12" viewBox="0 0 16 12"><path d="M4 11a3.400 3.400 0 0 1-.4-6.700A4.500 4.500 0 0 1 12 4a3.500 3.500 0 0 1 .5 7z" fill="#8d8d8d" stroke="#222" strokeWidth=".9" /><path d="M3 10.500 8.500 5 15 8.500q-.5 2.200-2.500 2.200H4z" fill="#f4f4f4" /></svg>
            <svg width="16" height="16" viewBox="0 0 16 16" fill="none" stroke="#111" strokeWidth="1.200"><path d="M3 4h7v8H3zM10 7l3-2v6l-3-2M5 1.300q3-1.300 6 0M5 14.700q3 1.300 6 0" /></svg>
            <svg width="16" height="14" viewBox="0 0 16 14" fill="none" stroke="#777" strokeWidth="1.100"><path d="M1.500 13C2 7 6 2 13.500 1.500M4.500 13.200c.5-4.200 3.500-8 9-8.500" /><path d="M7.500 13.300c.5-2.500 2.500-5 6-5.500M10.300 13.500c.2-1.300 1.500-2.500 3.200-2.700" stroke="#111" /><circle cx="12.700" cy="12.300" r="1.200" fill="#111" /></svg>
            <svg width="16" height="10" viewBox="0 0 16 10" fill="none" stroke="#000" strokeWidth="1.200"><path d="M1 1h13v8H1zM15.300 3.500v3" /><path d="M3 3h2.500v4H3z" fill="#000" stroke="none" /></svg>
            <svg width="16" height="12" viewBox="0 0 16 12" fill="none" stroke="#111" strokeWidth="1.100"><path d="M1.300 4h2.200l3-3v10l-3-3H1.300zM9.500 3.500l5 5M14.500 3.500l-5 5" /></svg>
          </TrayIcons>
          <LangText><Label $size={11.6} $track={-0.4}>ENG</Label></LangText>
          <Clock>17:06<br />18-03-2025</Clock>
          <Notice width="26" height="26" viewBox="0 0 26 26">
            <path d="M1 2h16v13H8l-3 3v-3H1z" fill="#000" /><path d="M4 5.500h10M4 8.500h10M4 11.500h6" stroke="#fff" strokeWidth="1.200" />
            <circle cx="16.500" cy="17" r="8" fill="#d3d9de" stroke="#777" strokeWidth=".9" />
            <text x="16.500" y="21" fontSize="11" textAnchor="middle" fill="#111" fontFamily="Open Sans, sans-serif">3</text>
          </Notice>
          <ShowDesktop />
        </Tray>
      </Taskbar>
    </Screen>
  );
}
